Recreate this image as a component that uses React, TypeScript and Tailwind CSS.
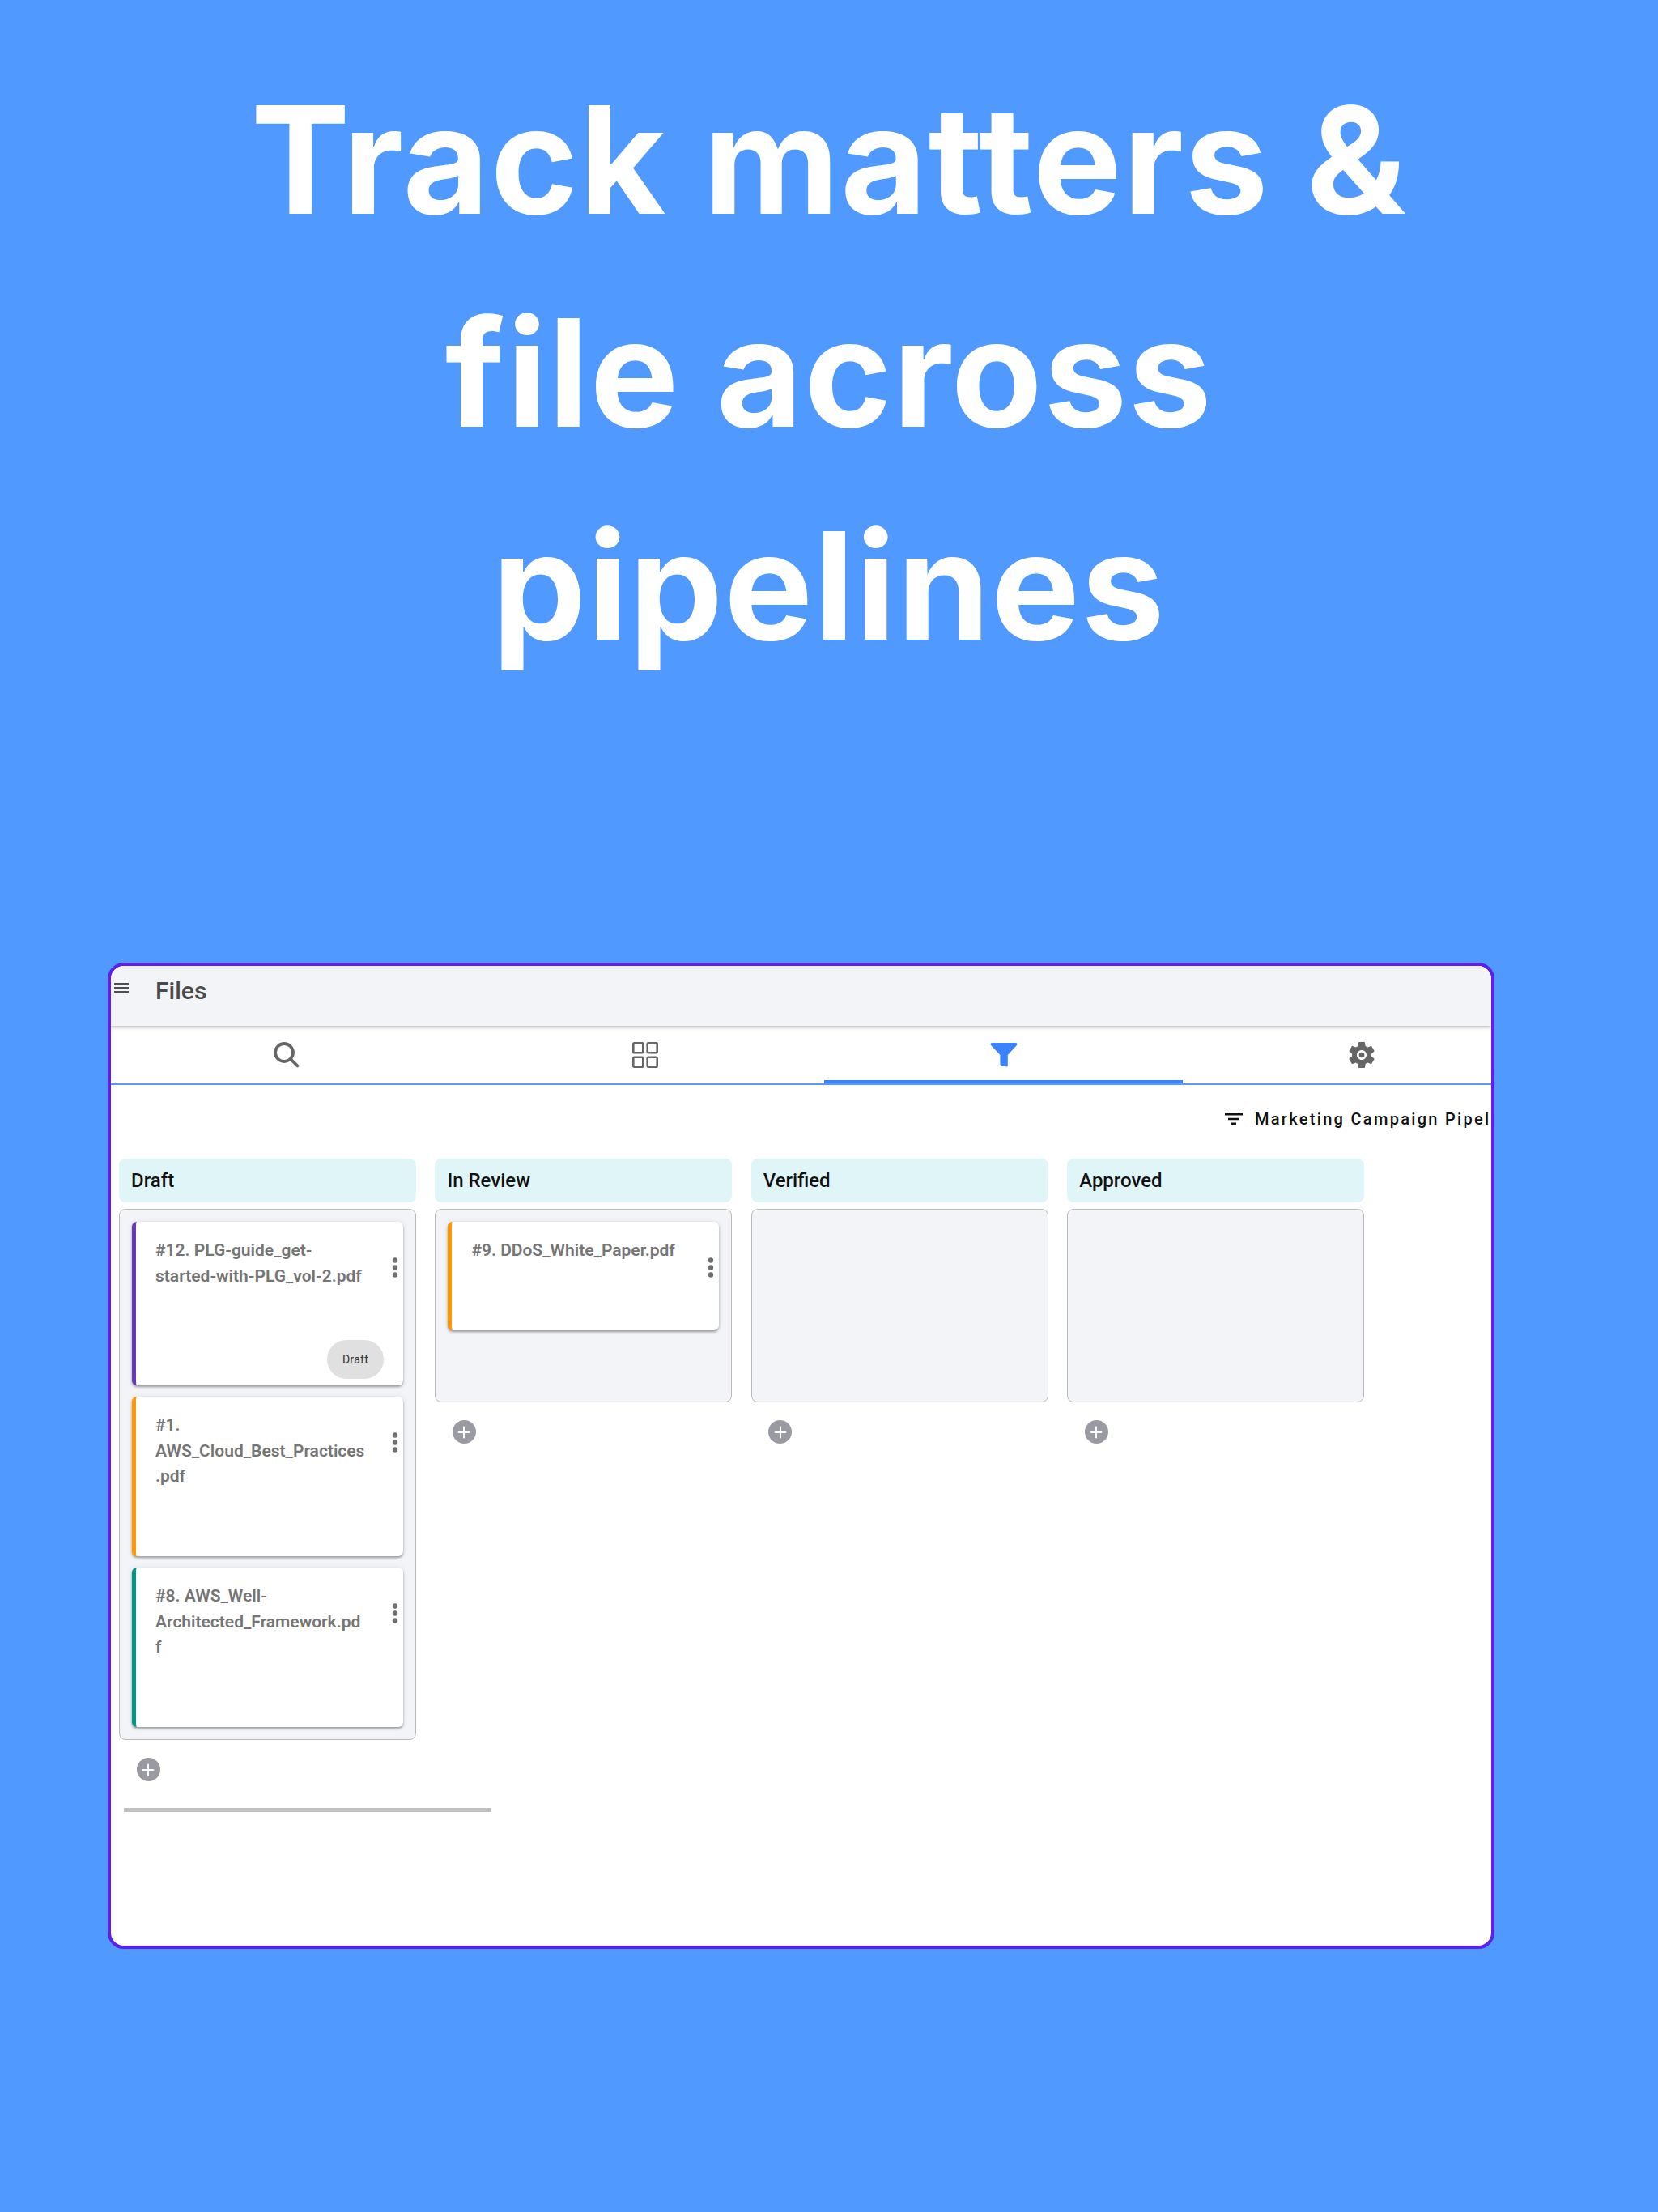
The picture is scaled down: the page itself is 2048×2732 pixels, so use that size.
import React from 'react';
import { Plus } from 'lucide-react';

const COLUMNS = [
  {
    name: 'Draft',
    cards: [
      { title: '#12. PLG-guide_get-\nstarted-with-PLG_vol-2.pdf', accent: 'border-l-[#673ab7]', height: 'h-[202px]', chip: 'Draft' },
      { title: '#1.\nAWS_Cloud_Best_Practices\n.pdf', accent: 'border-l-[#ff9800]', height: 'h-[197px]' },
      { title: '#8. AWS_Well-\nArchitected_Framework.pd\nf', accent: 'border-l-[#009688]', height: 'h-[197px]' },
    ],
  },
  {
    name: 'In Review',
    cards: [{ title: '#9. DDoS_White_Paper.pdf', accent: 'border-l-[#ff9800]', height: 'h-[134px]' }],
  },
  { name: 'Verified', cards: [] },
  { name: 'Approved', cards: [] },
];

function SearchIcon() {
  return (
    <svg width="34" height="34" viewBox="0 0 34 34" fill="none" stroke="#666666" strokeWidth="3.8" strokeLinecap="round">
      <circle cx="14" cy="14" r="11" />
      <path d="M22 22 L30.5 30.5" />
    </svg>
  );
}

function GridIcon() {
  return (
    <svg width="32" height="32" viewBox="0 0 32 32" fill="none" stroke="#666666" strokeWidth="2.6">
      <rect x="1.3" y="1.3" width="12" height="12" rx="1" />
      <rect x="18.7" y="1.3" width="12" height="12" rx="1" />
      <rect x="1.3" y="18.7" width="12" height="12" rx="1" />
      <rect x="18.7" y="18.7" width="12" height="12" rx="1" />
    </svg>
  );
}

function FunnelIcon() {
  return (
    <svg width="34" height="30" viewBox="0 0 34 30" fill="#3b82ff">
      <path d="M3 0 H31 Q34.5 0 33 3 L21.8 15 V28 Q21.8 29.6 20 29.5 L14 28 Q12.4 27.6 12.4 26 V15 L1 3 Q-0.5 0 3 0 Z" />
    </svg>
  );
}

function GearIcon() {
  return (
    <svg width="40" height="40" viewBox="0 0 24 24" fill="#666666">
      <path d="M19.14 12.94c.04-.3.06-.61.06-.94 0-.32-.02-.64-.07-.94l2.03-1.58c.18-.14.23-.41.12-.61l-1.92-3.32c-.12-.22-.37-.29-.59-.22l-2.39.96c-.5-.38-1.03-.7-1.62-.94l-.36-2.54c-.04-.24-.24-.41-.48-.41h-3.84c-.24 0-.43.17-.47.41l-.36 2.54c-.59.24-1.13.57-1.62.94l-2.39-.96c-.22-.08-.47 0-.59.22L2.74 8.87c-.12.21-.08.47.12.61l2.03 1.58c-.05.3-.09.63-.09.94s.02.64.07.94l-2.03 1.58c-.18.14-.23.41-.12.61l1.92 3.32c.12.22.37.29.59.22l2.39-.96c.5.38 1.03.7 1.62.94l.36 2.54c.05.24.24.41.48.41h3.84c.24 0 .44-.17.47-.41l.36-2.54c.59-.24 1.13-.56 1.62-.94l2.39.96c.22.08.47 0 .59-.22l1.92-3.32c.12-.22.07-.47-.12-.61l-2.01-1.58zM12 15.6c-1.98 0-3.6-1.62-3.6-3.6s1.62-3.6 3.6-3.6 3.6 1.62 3.6 3.6-1.62 3.6-3.6 3.6z" />
      <circle cx="12" cy="12" r="2" />
    </svg>
  );
}

function MoreIcon() {
  return (
    <svg width="8" height="25" viewBox="0 0 8 25" fill="#6f6f72">
      <circle cx="4" cy="3.5" r="3.2" />
      <circle cx="4" cy="12.5" r="3.2" />
      <circle cx="4" cy="21.5" r="3.2" />
    </svg>
  );
}

const TABS = [
  { icon: <SearchIcon />, active: false },
  { icon: <GridIcon />, active: false },
  { icon: <FunnelIcon />, active: true },
  { icon: <GearIcon />, active: false },
];

export default function App() {
  return (
    <div className="h-[2732px] w-[2048px] overflow-hidden bg-[#5099ff] font-['Roboto',sans-serif]">
      <h1 className="pt-[66px] text-center font-['Inter',sans-serif] text-[184px] leading-[263px] font-bold tracking-[1.5px] text-white">
        Track matters &amp;
        <br />
        file across
        <br />
        pipelines
      </h1>

      <div className="mt-[334px] ml-[133px] h-[1218px] w-[1713px] overflow-hidden rounded-[20px] border-4 border-[#5b1ff0] bg-white">
        {/* App bar */}
        <div className="relative z-10 flex h-[74px] items-start bg-[#f3f4f8] shadow-[0_2px_4px_rgba(0,0,0,0.25)]">
          <svg className="mt-[21px] ml-[4px]" width="18" height="12" viewBox="0 0 18 12" stroke="#4f4f4f" strokeWidth="2">
            <path d="M0 1 H18 M0 6 H18 M0 11 H18" />
          </svg>
          <span className="mt-[13px] ml-[33px] text-[30px] leading-[36px] font-medium text-[#4a4a4a]">Files</span>
        </div>

        {/* Tabs */}
        <div className="flex h-[73px] border-b-2 border-[#5b97ff]">
          {TABS.map((tab, idx) => (
            <div key={idx} className="relative flex w-[442.7px] shrink-0 items-center justify-center first:ml-[-4px]">
              {tab.icon}
              {tab.active && <span className="absolute right-0 bottom-0 left-0 h-[4px] bg-[#3b82ff]" />}
            </div>
          ))}
        </div>

        {/* Pipeline filter */}
        <div className="flex h-[91px] items-start overflow-hidden pt-[29px] pl-[1376px]">
          <svg className="mt-[6px] shrink-0" width="22" height="14" viewBox="0 0 22 14" stroke="#111111" strokeWidth="2.4">
            <path d="M0 1.2 H22 M4 7 H18 M8 12.8 H14" />
          </svg>
          <span className="ml-[15px] text-[20px] leading-[26px] font-medium tracking-[2.3px] whitespace-nowrap text-[#111111]">
            Marketing Campaign Pipeline
          </span>
        </div>

        {/* Board */}
        <div className="flex items-start gap-[23.4px] pl-[10px]">
          {COLUMNS.map((col) => (
            <div key={col.name} className="w-[367px] shrink-0">
              <div className="flex h-[54px] items-center rounded-lg bg-[#e0f5f8] pl-[15px] text-[24px] font-medium text-[#111111]">
                {col.name}
              </div>
              <div className="mt-[8px] flex min-h-[239px] flex-col gap-[14px] rounded-lg border border-[#bababa] bg-[#f3f4f8] p-[15px]">
                {col.cards.map((card) => (
                  <div
                    key={card.title}
                    className={`relative flex ${card.height} justify-between rounded-md border-l-[5px] ${card.accent} bg-white pt-[20px] pr-[6px] pl-[24px] shadow-[0_2px_3px_rgba(0,0,0,0.35),0_0_8px_rgba(0,0,0,0.06)]`}
                  >
                    <p className="text-[21px] leading-[31.5px] font-semibold whitespace-pre-line text-[#757575]">{card.title}</p>
                    <div className="mt-[24px] shrink-0">
                      <MoreIcon />
                    </div>
                    {card.chip && (
                      <span className="absolute right-[24px] bottom-[8px] flex h-[48px] w-[70px] items-center justify-center rounded-full bg-[#e0e0e0] text-[14px] tracking-[0.3px] text-[#333333]">
                        {card.chip}
                      </span>
                    )}
                  </div>
                ))}
              </div>
              <div className="mt-[22px] ml-[21.5px] flex h-[29px] w-[29px] items-center justify-center rounded-full bg-[#9a9aa2]">
                <Plus size={22} color="#ffffff" strokeWidth={2.2} />
              </div>
            </div>
          ))}
        </div>

        {/* Horizontal scrollbar */}
        <div className="mt-[33px] ml-[16px] h-[5px] w-[454px] bg-[#c1c1c1]" />
      </div>
    </div>
  );
}
